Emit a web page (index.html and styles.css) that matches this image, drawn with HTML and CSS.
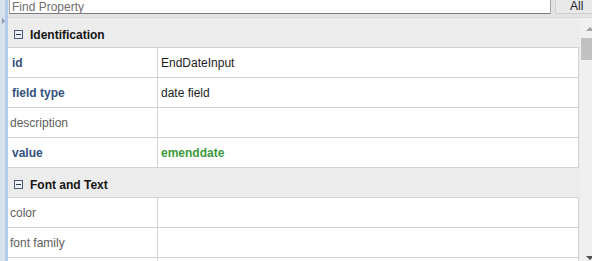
FILE: index.html
```html
<!DOCTYPE html>
<html>
<head>
    <title>Properties</title>
    <link rel="stylesheet" href="styles.css">
</head>
<body>
    <div class="app">
        <div class="side"><span class="side-arrow"></span></div>
        <div class="main">
            <div class="search-bar">
                <input type="text" class="search-input" placeholder="Find Property">
                <div class="btn-all">All</div>
            </div>
            <div class="body">
                <div class="props">
                    <div class="group-head"><span class="toggle"></span>Identification</div>
                    <div class="grid">
                        <div class="row"><div class="key key-set">id</div><div class="val">EndDateInput</div></div>
                        <div class="row"><div class="key key-set">field type</div><div class="val">date field</div></div>
                        <div class="row"><div class="key">description</div><div class="val"></div></div>
                        <div class="row"><div class="key key-set">value</div><div class="val val-bound">emenddate</div></div>
                    </div>
                    <div class="group-head"><span class="toggle"></span>Font and Text</div>
                    <div class="grid">
                        <div class="row"><div class="key">color</div><div class="val"></div></div>
                        <div class="row"><div class="key">font family</div><div class="val"></div></div>
                        <div class="row"><div class="key"></div><div class="val"></div></div>
                    </div>
                </div>
                <div class="scroll">
                    <span class="arrow-up"></span>
                    <div class="thumb"></div>
                    <div class="track"></div>
                    <span class="arrow-down"></span>
                </div>
            </div>
        </div>
    </div>
</body>
</html>
```

FILE: styles.css
```css
html, body {
    margin: 0;
    height: 100%;
    overflow: hidden;
}
body {
    font-family: "Liberation Sans", Arial, sans-serif;
    font-size: 12px;
    background-color: #ececec;
}
.app {
    display: flex;
    height: 261px;
}
.side {
    width: 5px;
    background-color: #d8e1ec;
    border-right: 3px solid #b3cbea;
    position: relative;
}
.side-arrow {
    position: absolute;
    left: 2px;
    top: 18px;
    border-left: 3px solid #8494aa;
    border-top: 3px solid transparent;
    border-bottom: 3px solid transparent;
}
.main {
    flex: 1;
    display: flex;
    flex-direction: column;
    min-width: 0;
}
.search-bar {
    display: flex;
    flex-shrink: 0;
    height: 18px;
    background-color: #e3e3e3;
    border-bottom: 1px solid #dadada;
    box-sizing: border-box;
}
.search-input {
    width: 542px;
    height: 14px;
    margin: 0 0 0 1px;
    padding: 0 0 0 2px;
    box-sizing: border-box;
    border: 1px solid #a8a8a8;
    border-top: none;
    border-bottom-color: #7c7c7c;
    background: #ffffff;
    font-family: "Liberation Sans", Arial, sans-serif;
    font-size: 12px;
    line-height: 13px;
    outline: none;
}
.search-input::placeholder {
    color: #6f6f6f;
}
.btn-all {
    margin-left: 4px;
    flex: 1;
    height: 14px;
    line-height: 12px;
    background-color: #e8e8e8;
    border-left: 1px solid #d2d2d2;
    border-bottom: 1px solid #cfcfcf;
    box-sizing: border-box;
    padding-left: 14px;
    color: #1b1b2e;
}
.body {
    flex: 1;
    display: flex;
    min-height: 0;
    overflow: hidden;
}
.props {
    flex: 1;
    margin-right: 1px;
}
.group-head {
    height: 29px;
    padding-top: 4px;
    box-sizing: border-box;
    display: flex;
    align-items: center;
    font-weight: bold;
    color: #141414;
    background-color: #ececec;
}
.toggle {
    width: 7px;
    height: 7px;
    margin: 0 7px 0 6px;
    border: 1px solid #4b5a79;
    background-color: #eef2f8;
    position: relative;
}
.toggle::after {
    content: "";
    position: absolute;
    left: 1px;
    top: 3px;
    width: 5px;
    height: 1px;
    background-color: #2d3a55;
}
.grid {
    border-top: 1px solid #d2d2d2;
    border-right: 1px solid #d2d2d2;
    background-color: #ffffff;
}
.row {
    display: flex;
    height: 30px;
    border-bottom: 1px solid #d2d2d2;
    box-sizing: border-box;
}
.key {
    width: 150px;
    border-right: 1px solid #d2d2d2;
    box-sizing: border-box;
    padding-left: 2px;
    display: flex;
    align-items: center;
    color: #5d5d5d;
}
.key-set {
    padding-left: 4px;
    font-weight: bold;
    color: #33527e;
}
.val {
    flex: 1;
    padding-left: 3px;
    display: flex;
    align-items: center;
    color: #1c1c1c;
}
.val-bound {
    font-weight: bold;
    color: #3e9a3c;
}
.scroll {
    width: 12px;
    flex-shrink: 0;
    background-color: #f0f0f0;
    display: flex;
    flex-direction: column;
    padding-left: 1px;
    box-sizing: border-box;
}
.arrow-up {
    margin: 9px 0 0 5px;
    width: 0;
    border-bottom: 4px solid #a3a3a3;
    border-left: 4px solid transparent;
    border-right: 4px solid transparent;
}
.thumb {
    margin-top: 7px;
    height: 22px;
    background-color: #c1c1c1;
}
.track {
    flex: 1;
}
.arrow-down {
    margin: 0 0 1px 5px;
    width: 0;
    border-top: 4px solid #505050;
    border-left: 4px solid transparent;
    border-right: 4px solid transparent;
}
```
